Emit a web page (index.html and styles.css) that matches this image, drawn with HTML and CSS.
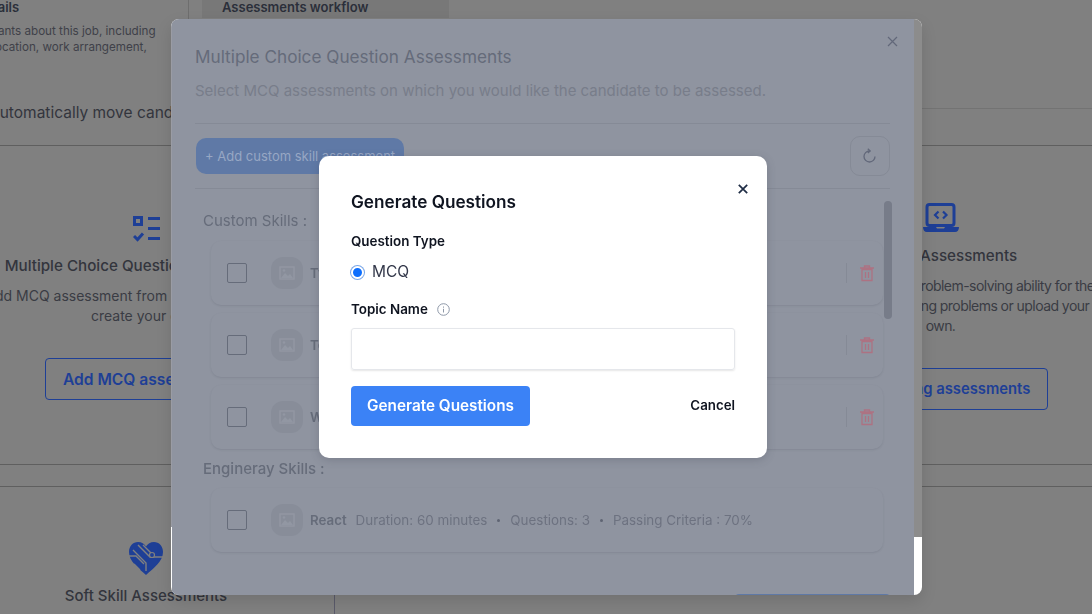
FILE: index.html
```html
<!DOCTYPE html>
<html lang="en">
<head>
<meta charset="utf-8">
<title>Assessments</title>
<link rel="stylesheet" href="styles.css">
</head>
<body>
<main class="page">
  <section class="steps">
    <div class="step-col">
      <h3 class="step-title">Details</h3>
      <p class="step-text">Tell applicants about this job, including<br>the job location, work arrangement,</p>
    </div>
    <div class="step-tab">Assessments workflow</div>
  </section>
  <section class="auto-row">
    <span class="auto-text">Automatically move candidates</span>
    <span class="auto-rule"></span>
  </section>
  <section class="cards">
    <article class="option">
      <svg class="option-icon" width="28" height="26" viewBox="0 0 28 26"><path fill="#1e3f96" fill-rule="evenodd" d="M0 0h10v10H0zM3 3v4h4V3z"/><path fill="#1e3f96" d="M15 1h12v3H15zM15 11h12v3H15zM15 21h12v3H15z"/><path fill="none" stroke="#1e3f96" stroke-width="3" d="M1 20l3.500 3.500L10 17.500"/></svg>
      <h2 class="option-title">Multiple Choice Question Assessments</h2>
      <p class="option-text">Add MCQ assessment from existing libraries and<br>create your own.</p>
      <button class="outline-btn mcq-btn">Add MCQ assessment</button>
    </article>
    <article class="option"></article>
    <article class="option option-coding">
      <svg class="option-icon" width="36" height="29" viewBox="0 0 36 29"><rect x="4" y="1.500" width="27" height="21" rx="2.500" fill="none" stroke="#1e3f96" stroke-width="3"/><path fill="#1e3f96" d="M0 24h13l1 1.500h7l1-1.500h14c0 3-1.500 5-4 5H4c-2.500 0-4-2-4-5z"/><path fill="none" stroke="#1e3f96" stroke-width="2.200" d="M15.500 8.500L12 12l3.500 3.500M20 8.500l3.500 3.500-3.500 3.500"/></svg>
      <h2 class="option-title">Coding Assessments</h2>
      <p class="option-text coding-text">Test the candidate's problem-solving ability for the<br>actual role using coding problems or upload your<br>own.</p>
      <button class="outline-btn coding-btn">Add coding assessments</button>
    </article>
  </section>
  <section class="lower">
    <article class="soft">
      <svg class="soft-icon" width="34" height="33" viewBox="0 0 34 33"><path fill="#1e3f96" d="M17 33C9 26 0 19 0 10 0 4 4 0 9 0c3.500 0 6.500 2 8 4.500C18.500 2 21.500 0 25 0c5 0 9 4 9 10 0 9-9 16-17 23z"/><path fill="none" stroke="#808080" stroke-width="1.400" d="M4 8l13 13v8M9 3l12 12h13M14 3l10 10M0 14h7l8 8M5 22l6 6"/><circle cx="23" cy="13" r="2.500" fill="#1e3f96" stroke="#808080" stroke-width="1.200"/></svg>
      <h2 class="soft-title">Soft Skill Assessments</h2>
    </article>
  </section>
</main>

<section class="mcq-modal">
  <div class="mcq-panel">
    <button class="mcq-close" aria-label="Close"><svg width="11" height="11" viewBox="0 0 11 11"><path stroke="#62687a" stroke-width="1.200" d="M1 1l9 9M10 1l-9 9"/></svg></button>
    <header class="mcq-head">
      <h1 class="mcq-title">Multiple Choice Question Assessments</h1>
      <p class="mcq-sub">Select MCQ assessments on which you would like the candidate to be assessed.</p>
    </header>
    <div class="mcq-tools">
      <button class="add-btn">+ Add custom skill assessment</button>
      <button class="refresh-btn" aria-label="Refresh"><svg width="16" height="16" viewBox="0 0 16 16"><path fill="none" stroke="#62687a" stroke-width="1.300" d="M13 8.500A5.500 5.500 0 1 1 7.500 3M5.800 .8L8.200 2.900 5.800 5"/></svg></button>
    </div>
    <div class="mcq-list">
      <h4 class="group-label first">Custom Skills :</h4>
      <div class="skill">
        <span class="check"></span>
        <span class="thumb"><svg width="16" height="14" viewBox="0 0 16 14"><rect x="1" y="1" width="14" height="12" fill="none" stroke="#9297a3" stroke-width="1.500"/><path fill="#9297a3" d="M2 12l4-5 3 3 2-2 3 4z"/><circle cx="5" cy="4.500" r="1.300" fill="#9297a3"/></svg></span>
        <strong class="skill-name">TypeScript</strong>
        <span class="skill-delete"><svg width="14" height="17" viewBox="0 0 14 17"><path fill="none" stroke="#ad7282" stroke-width="1.300" d="M2 4.500h10v11H2zM0 3h14M4.500 3V1h5v2M5.500 7v6M8.500 7v6"/></svg></span>
      </div>
      <div class="skill">
        <span class="check"></span>
        <span class="thumb"><svg width="16" height="14" viewBox="0 0 16 14"><rect x="1" y="1" width="14" height="12" fill="none" stroke="#9297a3" stroke-width="1.500"/><path fill="#9297a3" d="M2 12l4-5 3 3 2-2 3 4z"/><circle cx="5" cy="4.500" r="1.300" fill="#9297a3"/></svg></span>
        <strong class="skill-name">Testing</strong>
        <span class="skill-delete"><svg width="14" height="17" viewBox="0 0 14 17"><path fill="none" stroke="#ad7282" stroke-width="1.300" d="M2 4.500h10v11H2zM0 3h14M4.500 3V1h5v2M5.500 7v6M8.500 7v6"/></svg></span>
      </div>
      <div class="skill">
        <span class="check"></span>
        <span class="thumb"><svg width="16" height="14" viewBox="0 0 16 14"><rect x="1" y="1" width="14" height="12" fill="none" stroke="#9297a3" stroke-width="1.500"/><path fill="#9297a3" d="M2 12l4-5 3 3 2-2 3 4z"/><circle cx="5" cy="4.500" r="1.300" fill="#9297a3"/></svg></span>
        <strong class="skill-name">Webpack</strong>
        <span class="skill-delete"><svg width="14" height="17" viewBox="0 0 14 17"><path fill="none" stroke="#ad7282" stroke-width="1.300" d="M2 4.500h10v11H2zM0 3h14M4.500 3V1h5v2M5.500 7v6M8.500 7v6"/></svg></span>
      </div>
      <h4 class="group-label second">Engineray Skills :</h4>
      <div class="skill">
        <span class="check"></span>
        <span class="thumb"><svg width="16" height="14" viewBox="0 0 16 14"><rect x="1" y="1" width="14" height="12" fill="none" stroke="#9297a3" stroke-width="1.500"/><path fill="#9297a3" d="M2 12l4-5 3 3 2-2 3 4z"/><circle cx="5" cy="4.500" r="1.300" fill="#9297a3"/></svg></span>
        <strong class="skill-name">React</strong>
        <span class="skill-meta">Duration: 60 minutes</span><i class="dot"></i>
        <span class="skill-meta">Questions: 3</span><i class="dot"></i>
        <span class="skill-meta">Passing Criteria : 70%</span>
      </div>
    </div>
    <div class="mcq-foot"><span class="foot-btn"></span></div>
    <span class="scroll-thumb"></span>
  </div>
</section>

<section class="gen-modal">
  <button class="gen-close" aria-label="Close"><svg width="10" height="10" viewBox="0 0 10 10"><path stroke="#1f2d45" stroke-width="1.700" d="M.8.800l8.400 8.400M9.200.800L.8 9.200"/></svg></button>
  <h2 class="gen-title">Generate Questions</h2>
  <div class="gen-label">Question Type</div>
  <label class="gen-radio"><span class="radio"></span>MCQ</label>
  <div class="gen-label topic">Topic Name
    <svg width="13" height="13" viewBox="0 0 13 13"><circle cx="6.500" cy="6.500" r="5.800" fill="none" stroke="#8e98a8"/><path stroke="#8e98a8" d="M6.500 5.800v3.700M6.500 3.500v1.200"/></svg>
  </div>
  <div class="gen-input"></div>
  <div class="gen-actions">
    <button class="gen-submit">Generate Questions</button>
    <button class="gen-cancel">Cancel</button>
  </div>
</section>
</body>
</html>
```
FILE: styles.css
```css
* { box-sizing: border-box; }
html, body { height: 100%; }
body {
  margin: 0;
  overflow: hidden;
  background: #808080;
  font-family: "Inter", "Liberation Sans", sans-serif;
  color: #33353d;
}
h1, h2, h3, h4, p { margin: 0; }
button { font-family: inherit; background: none; border: 0; padding: 0; }

.page { width: 1190px; margin-left: -52px; }

.steps { display: flex; height: 100px; }
.step-col { width: 241px; border-right: 1px solid #6e6e6e; }
.step-title { font-size: 13px; font-weight: 600; line-height: 16px; margin: -1px 0 0 28px; color: #2b2f3a; }
.step-text { width: 202px; font-size: 11.65px; line-height: 16px; margin-top: 8px; color: #3f4149; white-space: nowrap; display: flex; flex-direction: column; align-items: center; text-align: center; }
.step-tab {
  width: 247px; height: 18px; margin-left: 13px; padding-left: 20px;
  background: #787878; font-size: 13px; font-weight: 600; line-height: 14px; color: #2b2f3a;
}

.auto-row { display: flex; height: 46px; border-bottom: 1px solid #5f5f5f; }
.auto-text { width: 974px; padding: 4px 0 0 41px; font-size: 15.5px; line-height: 18px; white-space: nowrap; }
.auto-rule { flex: 1; margin-top: 8px; height: 1px; background: #737373; }

.cards {
  display: grid; grid-template-columns: 397px 397px 397px;
  height: 319px; border-bottom: 1px solid #5f5f5f;
}
.option { display: flex; flex-direction: column; align-items: center; justify-content: center; padding-top: 6px; }
.option-coding { padding-top: 2px; }
.option-icon { display: block; }
.option-title { font-size: 15.2px; font-weight: 500; line-height: 20px; margin-top: 14px; white-space: nowrap; color: #33353d; }
.option-text { font-size: 14px; line-height: 20px; margin-top: 10px; text-align: center; white-space: nowrap; color: #3a3c44; }
.coding-text { letter-spacing: -.55px; }
.outline-btn {
  height: 42px; padding: 0 17px; margin-top: 32px;
  border: 1px solid #1e3f96; border-radius: 4px;
  font-weight: 600; color: #1e3f96; white-space: nowrap;
}
.mcq-btn { font-size: 15.6px; }
.coding-btn { font-size: 14.8px; }

.lower { margin-top: 21px; border-top: 1px solid #5f5f5f; height: 128px; }
.soft {
  width: 387px; height: 128px; border-right: 1px solid #5a5a6a;
  display: flex; flex-direction: column; align-items: center; padding: 55px 0 0 10px;
}
.soft-title { font-size: 15px; font-weight: 500; line-height: 20px; margin-top: 11px; white-space: nowrap; }

.mcq-modal {
  position: fixed; left: 171px; top: 19px; width: 751px; height: 576px;
  background: #fff; border-radius: 8px; overflow: hidden;
  box-shadow: 0 6px 16px rgba(0, 0, 0, .12);
}
.mcq-modal::before {
  content: ""; position: absolute; right: 0; top: 0; width: 8px; height: 518px; background: #8c8c8c; z-index: 1;
}
.mcq-modal::after {
  content: ""; position: absolute; left: 0; top: 0; width: 1px; height: 508px; background: #9a9ca4; z-index: 1;
}
.mcq-panel {
  position: relative; width: 742px; height: 576px; margin-left: 1px; background: #8f94a0; color: #656b7a;
  padding: 0 24px 0 23px;
}
.mcq-close { position: absolute; left: 714px; top: 16px; width: 13px; height: 13px; line-height: 0; }
.mcq-head { height: 105px; padding-top: 24px; border-bottom: 1px solid #858a96; }
.mcq-title { font-size: 17.2px; font-weight: 400; line-height: 28px; white-space: nowrap; }
.mcq-sub { font-size: 15px; line-height: 24px; margin-top: 8px; color: #787d8a; white-space: nowrap; }
.mcq-tools { height: 65px; display: flex; align-items: center; justify-content: space-between; border-bottom: 1px solid #858a96; }
.add-btn {
  width: 208px; height: 36px; margin-left: 1px; border-radius: 10px; background: #5f79a6;
  color: #97a7c4; font-size: 13px; text-align: left; padding-left: 9px; white-space: nowrap;
}
.refresh-btn { width: 40px; height: 40px; border: 1px solid #858a96; border-radius: 10px; line-height: 0; }
.mcq-list { padding-left: 8px; width: 695px; }
.group-label { font-size: 15px; font-weight: 400; line-height: 20px; color: #666c7a; }
.group-label.first { padding-top: 22px; margin-bottom: 10px; }
.group-label.second { margin: 10px 0 9px; font-weight: 500; }
.skill {
  display: flex; align-items: center; width: 672px; height: 64px; margin: 0 0 8px 8px; padding: 0 9px 0 16px;
  background: #8f94a0; border-radius: 10px;
  box-shadow: 0 1px 2px rgba(70, 75, 90, .16);
  font-size: 13.4px; white-space: nowrap;
}
.check { width: 20px; height: 20px; border: 1px solid #666c7a; border-radius: 2px; flex: none; }
.thumb {
  width: 32px; height: 32px; margin: 0 7px 0 24px; border-radius: 12px; background: #888d99;
  display: flex; align-items: center; justify-content: center; flex: none;
}
.skill-name { font-size: 13.3px; font-weight: 600; color: #666c7a; margin-right: 9px; }
.skill-meta { color: #6d7280; }
.dot { width: 3px; height: 3px; margin: 0 10px; border-radius: 50%; background: #5f6573; }
.skill-delete {
  margin-left: auto; height: 20px; padding-left: 13px; border-left: 1px solid #858a96;
  display: flex; align-items: center;
}
.mcq-foot { display: flex; justify-content: flex-end; margin-top: 42px; }
.foot-btn { width: 155px; height: 40px; background: #5f79a6; border-radius: 4px; }
.scroll-thumb { position: absolute; left: 712px; top: 182px; width: 8px; height: 118px; border-radius: 4px; background: #777c89; }

.gen-modal {
  position: fixed; left: 319px; top: 156px; width: 448px; height: 302px; padding: 33px 32px 0;
  background: #fff; border-radius: 10px; color: #0f1420;
  box-shadow: 0 2px 8px rgba(60, 65, 80, .25);
}
.gen-close { position: absolute; left: 419px; top: 28px; width: 10px; height: 10px; line-height: 0; }
.gen-title { font-size: 17.2px; font-weight: 600; line-height: 26px; }
.gen-label { font-size: 13.4px; font-weight: 600; line-height: 18px; margin-top: 17px; }
.gen-label.topic { margin-top: 17px; display: flex; align-items: center; gap: 9px; }
.gen-radio { display: flex; align-items: center; gap: 8px; font-size: 15.5px; line-height: 22px; margin-top: 11px; color: #33384a; }
.radio { width: 13px; height: 13px; border-radius: 50%; background: #0d6efd; border: 2px solid #fff; box-shadow: 0 0 0 1px #7aa7e8; }
.gen-input { height: 42px; margin-top: 10px; border: 1px solid #e5e7eb; border-radius: 3px; box-shadow: 0 1px 2px rgba(0, 0, 0, .1); }
.gen-actions { display: flex; align-items: center; justify-content: space-between; margin-top: 16px; }
.gen-submit { width: 179px; height: 40px; padding-bottom: 2px; background: #3b82f6; border-radius: 4px; color: #fff; font-size: 15.3px; font-weight: 600; }
.gen-cancel { padding-bottom: 2px; font-size: 13.3px; font-weight: 600; color: #0f1420; }
```
